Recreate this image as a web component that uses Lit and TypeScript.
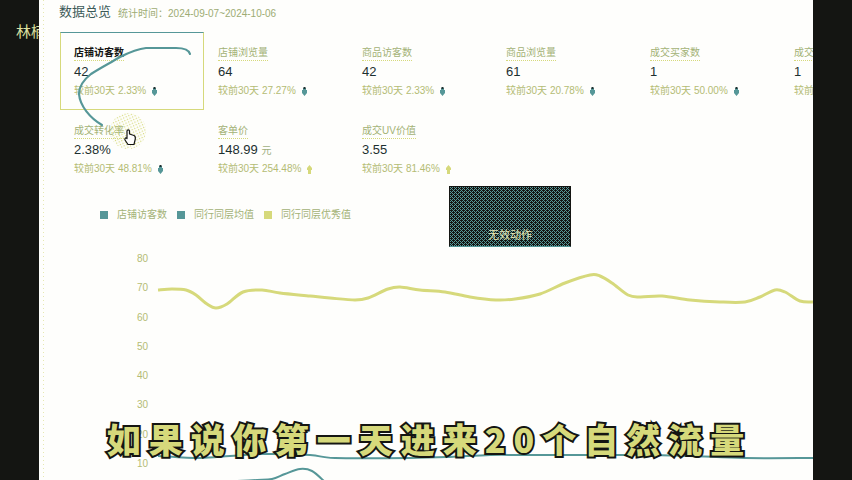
import { LitElement, html, svg, css } from "lit";
import { customElement, property } from "lit/decorators.js";
import { classMap } from "lit/directives/class-map.js";

type Trend = "up" | "down";
type Point = [number, number];

interface Metric {
  label: string;
  value: string;
  unit?: string;
  change: string;
  trend: Trend;
}

const METRICS: Metric[] = [
  { label: "店铺访客数", value: "42", change: "2.33%", trend: "down" },
  { label: "店铺浏览量", value: "64", change: "27.27%", trend: "down" },
  { label: "商品访客数", value: "42", change: "2.33%", trend: "down" },
  { label: "商品浏览量", value: "61", change: "20.78%", trend: "down" },
  { label: "成交买家数", value: "1", change: "50.00%", trend: "down" },
  { label: "成交件数", value: "1", change: "50.00%", trend: "down" },
  { label: "成交转化率", value: "2.38%", change: "48.81%", trend: "down" },
  { label: "客单价", value: "148.99", unit: "元", change: "254.48%", trend: "up" },
  { label: "成交UV价值", value: "3.55", change: "81.46%", trend: "up" },
];

const LEGEND = [
  { name: "店铺访客数", tone: "teal" },
  { name: "同行同层均值", tone: "teal" },
  { name: "同行同层优秀值", tone: "lime" },
];

const TICKS = [80, 70, 60, 50, 40, 30, 20, 10];

/* Series in plot coordinates: the plot is 656 wide and 230 high. */
const EXCELLENT: Point[] = [
  [1, 39], [15, 38], [29, 39], [39, 44], [50, 53], [59, 57], [70, 53], [86, 41], [105, 39],
  [123, 42], [153, 45], [173, 47], [198, 49], [211, 47], [231, 38], [243, 36], [263, 39],
  [288, 41], [313, 46], [339, 49], [358, 48], [383, 43], [408, 32], [433, 24], [443, 25],
  [455, 32], [471, 44], [483, 46], [505, 45], [533, 49], [563, 51], [588, 51], [603, 46],
  [618, 39], [628, 41], [643, 50], [656, 51],
];
const AVERAGE: Point[] = [
  [1, 205], [43, 207], [73, 205], [105, 203], [153, 204], [178, 207], [253, 207], [293, 206],
  [333, 204], [373, 204], [483, 204], [533, 205], [588, 207], [656, 207],
];
const VISITORS: Point[] = [
  [80, 230], [100, 229], [115, 228], [128, 223], [143, 218], [155, 220], [168, 231],
];

function smooth(points: Point[]): string {
  let d = `M${points[0][0]} ${points[0][1]}`;
  for (let i = 0; i < points.length - 1; i++) {
    const a = points[Math.max(0, i - 1)];
    const b = points[i];
    const c = points[i + 1];
    const e = points[Math.min(points.length - 1, i + 2)];
    const k = 6;
    d += `C${b[0] + (c[0] - a[0]) / k} ${b[1] + (c[1] - a[1]) / k} ${c[0] - (e[0] - b[0]) / k} ${c[1] - (e[1] - b[1]) / k} ${c[0]} ${c[1]}`;
  }
  return d;
}

@customElement("metric-card")
class MetricCard extends LitElement {
  @property({ attribute: false }) metric!: Metric;
  @property({ type: Boolean }) selected = false;

  static styles = css`
    :host { display: block; min-width: 0; }
    .card {
      width: 100%;
      height: 78px;
      box-sizing: border-box;
      display: flex;
      flex-direction: column;
      align-items: flex-start;
      gap: 1px;
      padding: 13px 13px 0;
      border: 1px solid transparent;
      background: none;
      font: inherit;
      text-align: left;
      white-space: nowrap;
      color: #b4bc74;
    }
    .card.selected {
      border: 1px solid #d6d97b;
      border-top-color: #569798;
    }
    .label {
      line-height: 14px;
      border-bottom: 1px dotted #d6d97b;
      color: #a3b276;
    }
    .selected .label { color: #141512; font-weight: 700; }
    .value { font-size: 13px; line-height: 20px; color: #1d3030; }
    .unit { font-size: 10px; line-height: 16px; color: #a0b07f; }
    .change { display: flex; align-items: center; line-height: 16px; gap: 5px; }
    .arrow { width: 7px; height: 9px; display: block; }
  `;

  render() {
    const m = this.metric;
    return html`
      <button class=${classMap({ card: true, selected: this.selected })} aria-pressed=${this.selected}>
        <span class="label">${m.label}</span>
        <span class="value">${m.value}${m.unit ? html` <span class="unit">${m.unit}</span>` : ""}</span>
        <span class="change">
          <span>较前30天 ${m.change}</span>
          ${m.trend === "down"
            ? html`<svg class="arrow" viewBox="0 0 7 9" aria-hidden="true">
                <path d="M2 1H5V3H6V6L3.500 9L1 6V3H2Z" fill="#569798" />
                <path d="M2.500 0H4.500V2H2.500Z" fill="#1d3030" />
              </svg>`
            : html`<svg class="arrow" viewBox="0 0 7 9" aria-hidden="true">
                <path d="M2 9H5V5H6V3L3.500 0L1 3V5H2Z" fill="#d6d97b" />
              </svg>`}
        </span>
      </button>
    `;
  }
}

@customElement("trend-chart")
class TrendChart extends LitElement {
  static styles = css`
    :host { display: block; }
    .legend {
      display: flex;
      list-style: none;
      margin: 0;
      padding: 0 0 0 61px;
      gap: 10px;
      line-height: 16px;
      color: #a3b276;
    }
    .item { display: flex; align-items: center; gap: 9px; }
    .swatch { width: 8px; height: 8px; }
    .teal { background: #569798; }
    .lime { background: #d6d97b; }
    .body { display: flex; gap: 9px; padding: 28px 0 0 88px; }
    .axis {
      width: 21px;
      height: 221px;
      display: flex;
      flex-direction: column;
      justify-content: space-between;
      text-align: right;
      line-height: 16px;
      color: #b4bc74;
    }
    .plot { flex: 1; min-width: 0; height: 230px; display: block; }
    .line { fill: none; vector-effect: non-scaling-stroke; }
    .strong { stroke: #d6d97b; stroke-width: 3px; }
    .thin { stroke: #569798; stroke-width: 2px; }
  `;

  render() {
    return html`
      <ul class="legend">
        ${LEGEND.map((l) => html`<li class="item"><span class="swatch ${l.tone}"></span>${l.name}</li>`)}
      </ul>
      <div class="body">
        <div class="axis">${TICKS.map((t) => html`<span>${t}</span>`)}</div>
        <svg class="plot" viewBox="0 0 656 230" preserveAspectRatio="none" role="img" aria-label="趋势图">
          ${svg`
            <path class="line strong" d=${smooth(EXCELLENT)} />
            <path class="line thin" d=${smooth(AVERAGE)} />
            <path class="line thin" d=${smooth(VISITORS)} />
          `}
        </svg>
      </div>
    `;
  }
}

@customElement("app-root")
class AppRoot extends LitElement {
  static styles = css`
    :host {
      display: block;
      position: relative;
      overflow: hidden;
      height: 100vh;
      background: #141512;
      font-family: "Liberation Sans", "Noto Sans CJK SC", sans-serif;
      font-size: 10px;
    }
    .frame { display: grid; grid-template-columns: 39px minmax(0, 1fr) 39px; min-height: 100%; }
    .rail { overflow: hidden; padding: 22px 0 0 16px; }
    .author { margin: 0; font-size: 15px; line-height: 20px; white-space: nowrap; color: #dde0a0; }
    .page {
      overflow: hidden;
      background: linear-gradient(#e6e8b0 1px, transparent 1px) 4px 0 / 1px 4px repeat-y, #fefefc;
    }
    .head { display: flex; align-items: center; gap: 7px; height: 24px; padding-left: 20px; }
    .title { margin: 0; font-size: 13px; font-weight: 400; line-height: 24px; color: #3c5a58; }
    .period { color: #9dac74; }
    .metrics {
      display: grid;
      grid-template-columns: repeat(6, minmax(144px, 1fr));
      padding: 8px 0 0 21px;
    }
    .chart { margin-top: 19px; }
    .sketch { position: absolute; left: 0; top: 0; width: 220px; height: 160px; pointer-events: none; }
    .toast {
      position: absolute;
      left: 449px;
      top: 186px;
      width: 122px;
      height: 61px;
      box-sizing: border-box;
      display: flex;
      align-items: flex-end;
      justify-content: center;
      padding-bottom: 3px;
      border: 1px solid #141512;
      border-bottom-color: #569798;
      background: #141512;
      font-size: 11px;
      line-height: 16px;
      color: #e9ebb8;
    }
    .weave { position: absolute; inset: 0; width: 100%; height: 100%; }
    .message { position: relative; }
    .caption {
      position: absolute;
      left: 7px;
      right: 0;
      bottom: 17px;
      margin: 0;
      text-align: center;
      white-space: nowrap;
      font-family: "Noto Sans CJK SC", sans-serif;
      font-size: 34px;
      font-weight: 900;
      line-height: 48px;
      letter-spacing: 8px;
      color: #d6d97b;
      -webkit-text-stroke: 4px #141512;
      stroke-linejoin: round;
      paint-order: stroke fill;
    }
  `;

  render() {
    return html`
      <div class="frame">
        <aside class="rail"><p class="author">林楠</p></aside>
        <main class="page">
          <header class="head">
            <h1 class="title">数据总览</h1>
            <span class="period">统计时间：2024-09-07~2024-10-06</span>
          </header>
          <section class="metrics">
            ${METRICS.map((m, i) => html`<metric-card .metric=${m} ?selected=${i === 0}></metric-card>`)}
          </section>
          <trend-chart class="chart"></trend-chart>
        </main>
      </div>
      <svg class="sketch" viewBox="0 0 220 160" aria-hidden="true">
        <defs>
          <pattern id="dots" width="4" height="4" patternUnits="userSpaceOnUse" patternTransform="rotate(20)">
            <rect width="1.2" height="1.2" fill="#d6d97b" />
            <rect x="2" y="2" width="1.2" height="1.2" fill="#d6d97b" />
          </pattern>
        </defs>
        <circle cx="128" cy="131" r="18" fill="url(#dots)" />
        <path
          d="M190 54C189 50 183 48 176 48H146C136 49 128 53 120 57C110 63 100 68 91 74C82 81 79 87 79 94C80 106 90 118 102 125"
          fill="none" stroke="#569798" stroke-width="2.2" stroke-linecap="round" />
        <path
          d="M127 138V131C127 129.500 129.500 129.500 129.500 131V134L134 135.500C135.500 136 135.500 137 135.300 139L134 144.500H128L125 140C124.500 138 126 137.500 127 138.500Z"
          fill="#fefefc" stroke="#141512" stroke-width="1.200" stroke-linejoin="round" />
      </svg>
      <div class="toast" role="status">
        <svg class="weave" aria-hidden="true">
          <defs>
            <pattern id="weave" width="4" height="4" patternUnits="userSpaceOnUse">
              <path
                d="M0 0h1v1h-1zM2 0h1v1h-1zM1 1h1v1h-1zM0 2h1v1h-1zM2 2h1v1h-1zM3 3h1v1h-1z"
                fill="#569798" shape-rendering="crispEdges" />
            </pattern>
          </defs>
          <rect width="100%" height="100%" fill="url(#weave)" />
        </svg>
        <span class="message">无效动作</span>
      </div>
      <p class="caption">如果说你第一天进来20个自然流量</p>
    `;
  }
}
